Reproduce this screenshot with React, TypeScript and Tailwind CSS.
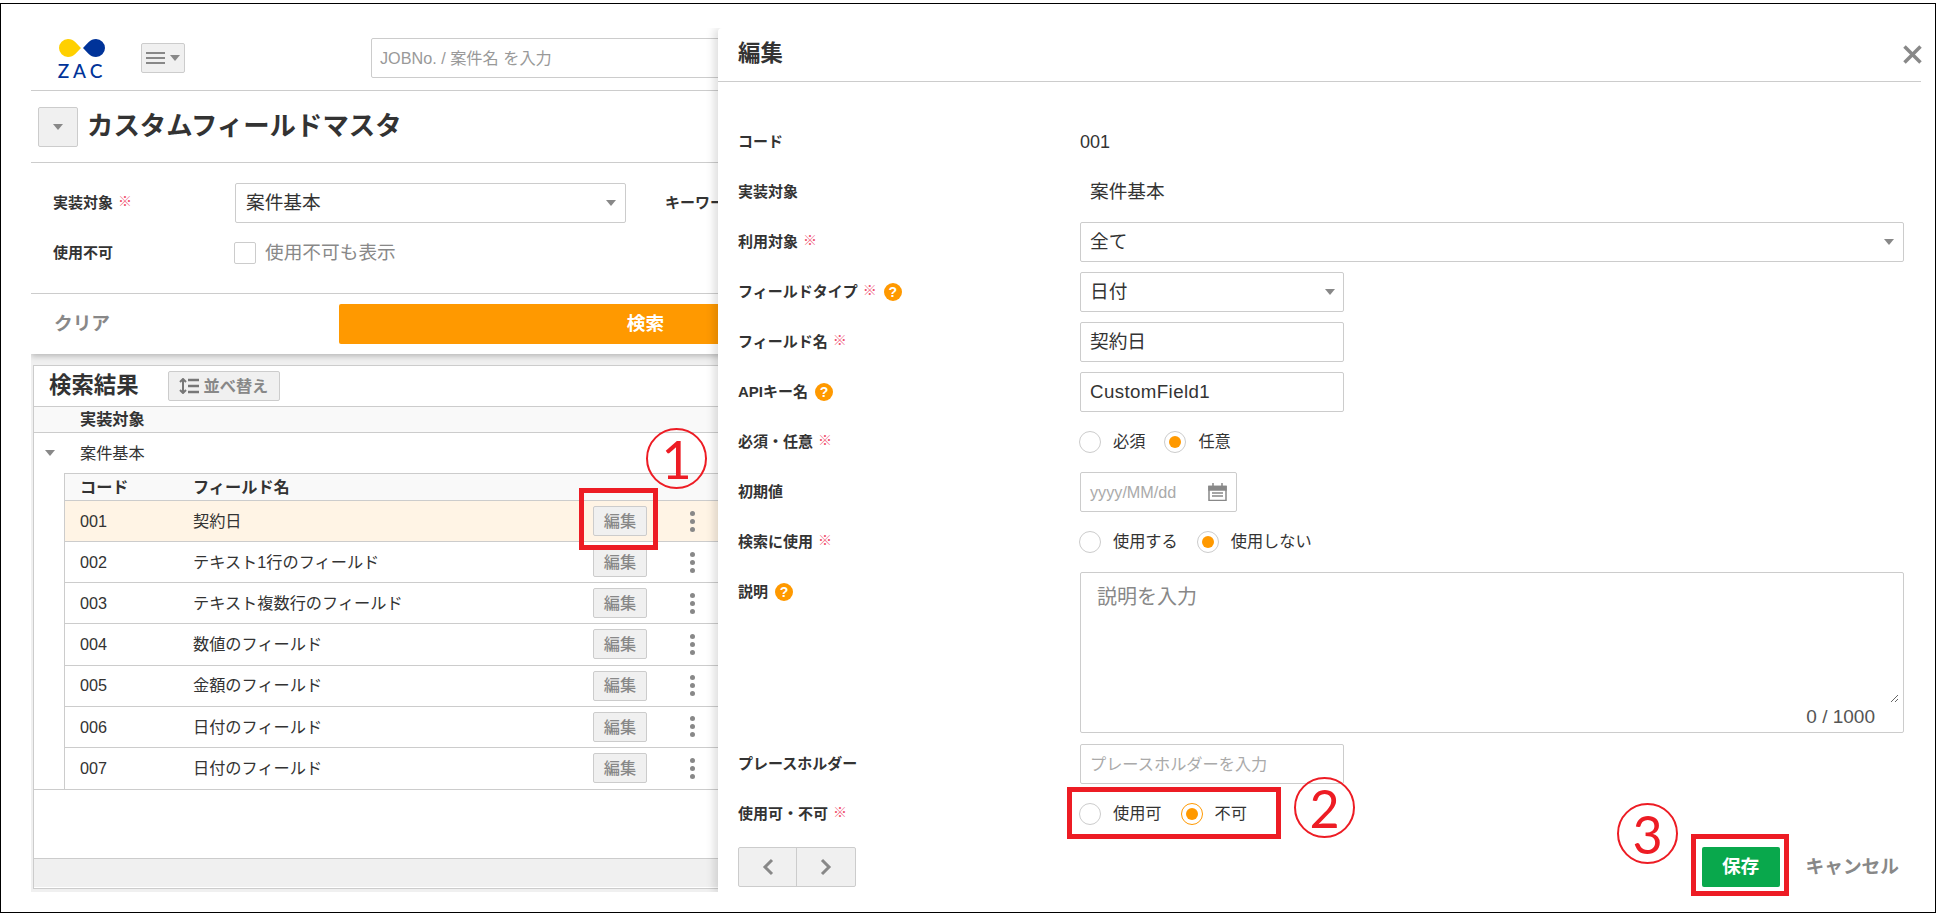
import React from "react";

const rows = [
  ["001", "契約日"],
  ["002", "テキスト1行のフィールド"],
  ["003", "テキスト複数行のフィールド"],
  ["004", "数値のフィールド"],
  ["005", "金額のフィールド"],
  ["006", "日付のフィールド"],
  ["007", "日付のフィールド"],
];

function Caret({ className = "" }: { className?: string }) {
  return (
    <svg width="10" height="6" viewBox="0 0 10 6" className={className}>
      <path d="M0 0h10L5 6z" fill="#888" />
    </svg>
  );
}

function Req() {
  return <span className="mb-[4px] ml-[5px] text-[14px] leading-none font-normal text-[#f0506e]">※</span>;
}

function Help({ className = "ml-[7px]" }: { className?: string }) {
  return (
    <span className={`${className} flex h-[18px] w-[18px] items-center justify-center rounded-full bg-[#ff9900] text-[14px] font-bold leading-none text-white`}>
      ?
    </span>
  );
}

function Radio({ label, on, accent, gap = "mr-[19px]" }: { label: string; on?: boolean; accent?: boolean; gap?: string }) {
  return (
    <span className={`flex items-center ${gap}`}>
      <span className={`flex h-[22px] w-[22px] items-center justify-center rounded-full border bg-white ${accent ? "border-[#ff9900]" : "border-[#ccc]"}`}>
        {on && <span className="h-[12px] w-[12px] rounded-full bg-[#ff9900]" />}
      </span>
      <span className="ml-[12px] pb-[1px] text-[16.2px] text-[#333]">{label}</span>
    </span>
  );
}

function Field({ label, h = "h-[40px]", children }: { label: React.ReactNode; h?: string; children: React.ReactNode }) {
  return (
    <div className={`flex ${h}`}>
      <div className="flex h-[40px] w-[342px] shrink-0 items-center text-[15px] font-bold text-[#333]">{label}</div>
      {children}
    </div>
  );
}

function Box({ w, children }: { w: string; children: React.ReactNode }) {
  return (
    <div className={`relative flex h-[40px] items-center rounded-[2px] border border-[#ccc] bg-white pl-[9px] text-[18.7px] text-[#333] ${w}`}>
      {children}
    </div>
  );
}

function Circled({ n, className }: { n: string; className: string }) {
  return (
    <div className={`absolute z-30 flex h-[61px] w-[61px] items-center justify-center rounded-full border-[2px] border-[#ed1c24] text-[52px] font-normal leading-none text-[#ed1c24] [font-family:Lato,sans-serif] ${className}`}>
      {n}
    </div>
  );
}

export default function App() {
  return (
    <div className="relative h-[915px] w-[1941px] overflow-hidden bg-white pt-[3px] [font-family:'Liberation_Sans','Noto_Sans_CJK_JP',sans-serif]">
      <div className="h-[910px] w-[1936px] overflow-hidden border border-black pl-[30px]">
        <div className="w-[1000px]">
          {/* Header */}
          <div className="flex h-[87px] items-start border-b border-[#ccc] pt-[34px]">
            <div className="ml-[28px] mt-[1px] flex w-[46px] flex-col items-center">
              <svg width="46" height="18" viewBox="0 0 46 18">
                <path d="M22 9C18 13 15 18 9 18A9 9 0 0 1 9 0C15 0 18 5 22 9Z" fill="#ffd000" />
                <path d="M24 9C28 5 31 0 37 0A9 9 0 0 1 37 18C31 18 28 13 24 9Z" fill="#003399" />
              </svg>
              <span className="mt-[3px] whitespace-nowrap text-[19px] font-medium leading-[22px] tracking-[4px] text-[#003399] [font-family:Lato,sans-serif]">
                ZAC
              </span>
            </div>
            <div className="ml-[36px] mt-[5px] flex h-[30px] w-[44px] items-center rounded-[2px] border border-[#ccc] bg-[#f0f0f0] pl-[4px]">
              <div className="flex w-[19px] flex-col gap-[3px]">
                <span className="h-[2px] bg-[#888]" />
                <span className="h-[2px] bg-[#888]" />
                <span className="h-[2px] bg-[#888]" />
              </div>
              <Caret className="ml-[5px]" />
            </div>
            <input
              readOnly
              placeholder="JOBNo. / 案件名 を入力"
              className="ml-[186px] h-[40px] w-[500px] rounded-[2px] border border-[#ccc] pl-[8px] text-[16.2px] outline-none placeholder:text-[#999]"
            />
          </div>

          {/* Title */}
          <div className="flex h-[72px] items-center border-b border-[#ccc] pl-[7px]">
            <div className="flex h-[40px] w-[40px] items-center justify-center rounded-[2px] border border-[#ccc] bg-[#f0f0f0]">
              <Caret />
            </div>
            <h1 className="ml-[9px] pt-[1px] text-[26.4px] font-bold text-[#333]">カスタムフィールドマスタ</h1>
          </div>

          {/* Search conditions */}
          <div className="relative z-10 bg-white shadow-[0_2px_6px_rgba(0,0,0,0.25)] [clip-path:inset(0_0_-20px_0)]">
            <div className="h-[131px] border-b border-[#ccc] pt-[20px]">
              <div className="flex h-[40px] items-center">
                <div className="flex w-[204px] items-center pl-[22px] text-[15px] font-bold text-[#333]">
                  実装対象
                  <Req />
                </div>
                <div className="flex h-[40px] w-[391px] items-center justify-between rounded-[2px] border border-[#ccc] pl-[10px] pr-[9px] text-[18.7px] text-[#333]">
                  案件基本
                  <Caret />
                </div>
                <span className="ml-[39px] text-[15px] font-bold text-[#333]">キーワード</span>
              </div>
              <div className="mt-[19px] flex h-[22px] items-center">
                <div className="w-[203px] pl-[22px] text-[15px] font-bold text-[#333]">使用不可</div>
                <span className="h-[22px] w-[22px] rounded-[2px] border border-[#ccc]" />
                <span className="ml-[9px] text-[18.7px] text-[#888]">使用不可も表示</span>
              </div>
            </div>
            <div className="flex h-[60px] items-start pt-[10px]">
              <span className="ml-[23px] flex h-[40px] w-[285px] items-center text-[18.7px] font-bold text-[#888]">クリア</span>
              <div className="flex h-[40px] w-[613px] items-center justify-center rounded-[2px] bg-[#ff9900] text-[18.7px] font-bold text-white">
                検索
              </div>
            </div>
          </div>

          {/* Results */}
          <div className="bg-[#f0f0f0] pl-[2px] pt-[11px] pb-[3px]">
            <div className="border-l border-t border-b border-[#ccc] bg-white">
              <div className="flex h-[40px] items-center pl-[15px]">
                <h2 className="text-[22.4px] font-bold text-[#333]">検索結果</h2>
                <div className="ml-[29px] flex h-[30px] w-[112px] items-center rounded-[2px] border border-[#ccc] bg-[#f0f0f0] pl-[10px] text-[16.2px] font-bold text-[#888]">
                  <svg width="20" height="16" viewBox="0 0 20 16" fill="none" stroke="#777" strokeWidth="2">
                    <path d="M4 1v14M1 4l3-3 3 3M1 12l3 3 3-3" />
                    <path d="M9 2h11M9 8h11M9 14h11" strokeWidth="2.5" />
                  </svg>
                  <span className="ml-[5px]">並べ替え</span>
                </div>
              </div>
              <div className="flex h-[27px] items-center border-y border-[#ccc] bg-[#f9f9f9] pl-[46px] text-[16.2px] font-bold text-[#333]">
                実装対象
              </div>
              <div className="flex h-[40px] items-center pl-[11px] text-[16.2px] text-[#333]">
                <Caret />
                <span className="ml-[25px] pt-[1px]">案件基本</span>
              </div>
              <div className="border-b border-[#ccc] pl-[30px]">
                <div className="border-l border-t border-[#ccc]">
                  <div className="flex h-[27px] items-center border-b border-[#ccc] bg-[#f9f9f9] pt-[1px] text-[16.2px] font-bold text-[#333]">
                    <span className="w-[128px] pl-[15px]">コード</span>
                    <span>フィールド名</span>
                  </div>
                  {rows.map(([code, name], i) => (
                    <div
                      key={code}
                      className={`flex h-[41.15px] items-center text-[16.2px] text-[#333] ${i === 0 ? "bg-[#fff4e5]" : ""} ${i < rows.length - 1 ? "border-b border-[#ccc]" : ""}`}
                    >
                      <span className="w-[128px] pl-[15px]">{code}</span>
                      <span className="w-[400px]">{name}</span>
                      <span className="flex h-[30px] w-[54px] items-center justify-center rounded-[2px] border border-[#ccc] bg-[#f0f0f0] text-[16.2px] font-medium text-[#888]">
                        編集
                      </span>
                      <span className="ml-[43px] flex w-[5px] flex-col gap-[3px]">
                        <span className="h-[5px] w-[5px] rounded-full bg-[#888]" />
                        <span className="h-[5px] w-[5px] rounded-full bg-[#888]" />
                        <span className="h-[5px] w-[5px] rounded-full bg-[#888]" />
                      </span>
                    </div>
                  ))}
                </div>
              </div>
              <div className="h-[68px]" />
              <div className="h-[29px] border-t border-[#ccc] bg-[#f0f0f0]" />
              <div className="h-[1px]" />
            </div>
          </div>
        </div>
      </div>

      {/* Edit panel */}
      <div className="absolute left-[718px] top-[28px] z-20 h-[864px] w-[1217px] rounded-tl-[4px] bg-white shadow-[-4px_0_9px_rgba(0,0,0,0.13)] [clip-path:inset(0_0_0_-20px)]">
        <div className="mr-[14px] flex h-[54px] items-center justify-between border-b border-[#ccc] pb-[2px] pl-[20px]">
          <h2 className="text-[22.4px] font-bold text-[#333]">編集</h2>
          <svg width="19" height="19" viewBox="0 0 19 19" className="-mr-[1px] mt-[2px]" stroke="#888" strokeWidth="3.5">
            <path d="M1.5 1.5l16 16M17.5 1.5l-16 16" />
          </svg>
        </div>

        <div className="flex flex-col gap-[10px] pl-[20px] pr-[31px] pt-[40px]">
          <Field label="コード">
            <span className="flex items-center text-[18px] text-[#333]">001</span>
          </Field>
          <Field label="実装対象">
            <span className="flex items-center pl-[10px] text-[18.7px] text-[#333]">案件基本</span>
          </Field>
          <Field label={<>利用対象<Req /></>}>
            <Box w="w-[824px] justify-between pr-[9px]">
              全て
              <Caret />
            </Box>
          </Field>
          <Field label={<>フィールドタイプ<Req /><Help /></>}>
            <Box w="w-[264px] justify-between pr-[8px]">
              日付
              <Caret />
            </Box>
          </Field>
          <Field label={<>フィールド名<Req /></>}>
            <Box w="w-[264px]">契約日</Box>
          </Field>
          <Field label={<>APIキー名<Help /></>}>
            <Box w="w-[264px]">
              <span className="tracking-[0.4px]">CustomField1</span>
            </Box>
          </Field>
          <Field label={<>必須・任意<Req /></>}>
            <div className="-ml-px flex items-center">
              <Radio label="必須" />
              <Radio label="任意" on />
            </div>
          </Field>
          <Field label="初期値">
            <Box w="w-[157px] justify-between pr-[9px]">
              <span className="text-[16.2px] text-[#aaa]">yyyy/MM/dd</span>
              <svg width="19" height="18" viewBox="0 0 19 18" fill="none" stroke="#888" strokeWidth="1.5">
                <path d="M1 3.5h17v14H1z" />
                <path d="M1 3.5h17V7H1z" fill="#888" />
                <path d="M5 0v3M14 0v3M4 10h11M4 13h11" />
              </svg>
            </Box>
          </Field>
          <Field label={<>検索に使用<Req /></>}>
            <div className="-ml-px flex items-center">
              <Radio label="使用する" />
              <Radio label="使用しない" on />
            </div>
          </Field>
          <Field label={<>説明<Help /></>} h="h-[162px]">
            <div className="h-[161px] w-[824px] rounded-[2px] border border-[#ccc]">
              <textarea
                readOnly
                placeholder="説明を入力"
                className="block h-[130px] w-[818px] resize-y pl-[16px] pt-[9px] text-[20px] leading-[30px] outline-none placeholder:text-[#888]"
              />
              <div className="flex h-[28px] items-center justify-end pr-[28px] pt-[1px] text-[19px] text-[#555]">0 / 1000</div>
            </div>
          </Field>
          <Field label="プレースホルダー">
            <input
              readOnly
              placeholder="プレースホルダーを入力"
              className="h-[40px] w-[264px] rounded-[2px] border border-[#ccc] pl-[9px] text-[16.2px] outline-none placeholder:text-[#aaa]"
            />
          </Field>
          <Field label={<>使用可・不可<Req /></>}>
            <div className="-ml-px flex items-center">
              <Radio label="使用可" />
              <Radio label="不可" on accent />
            </div>
          </Field>
          <div className="mt-[3px] flex items-center justify-between pr-[5px]">
            <div className="flex h-[40px] w-[118px] rounded-[2px] border border-[#ccc] bg-[#f0f0f0]">
              <span className="flex w-[58px] items-center justify-center border-r border-[#ccc]">
                <svg width="12" height="18" viewBox="0 0 12 18" fill="none" stroke="#888" strokeWidth="3">
                  <path d="M10 2L3 9l7 7" />
                </svg>
              </span>
              <span className="flex flex-1 items-center justify-center">
                <svg width="12" height="18" viewBox="0 0 12 18" fill="none" stroke="#888" strokeWidth="3">
                  <path d="M2 2l7 7-7 7" />
                </svg>
              </span>
            </div>
            <div className="flex items-center">
              <span className="flex h-[40px] w-[78px] items-center justify-center rounded-[2px] bg-[#09a84c] text-[18.7px] font-bold text-white">
                保存
              </span>
              <span className="ml-[26px] text-[18.7px] font-bold text-[#888]">キャンセル</span>
            </div>
          </div>
        </div>
      </div>

      {/* Annotations */}
      <div className="absolute left-[579px] top-[488px] z-30 h-[62px] w-[79px] border-[5px] border-[#ed1c24]" />
      <div className="absolute left-[1067px] top-[787px] z-30 h-[52px] w-[214px] border-[5px] border-[#ed1c24]" />
      <div className="absolute left-[1691px] top-[834px] z-30 h-[62px] w-[98px] border-[5px] border-[#ed1c24]" />
      <Circled n="1" className="left-[646px] top-[428px]" />
      <Circled n="2" className="left-[1294px] top-[777px]" />
      <Circled n="3" className="left-[1617px] top-[803px]" />
    </div>
  );
}
